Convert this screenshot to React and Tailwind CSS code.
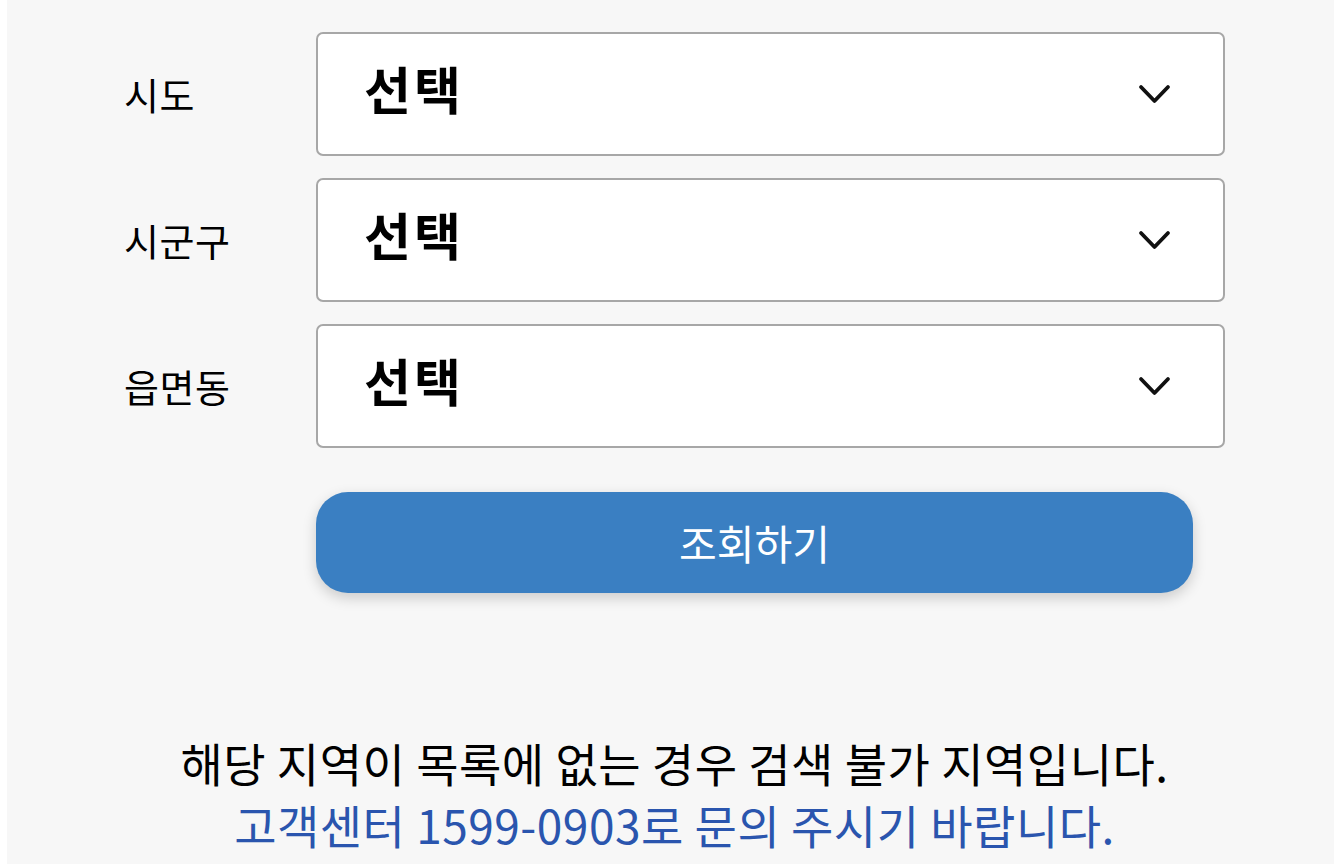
const KR = { fontFamily: '"Noto Sans CJK KR", "Noto Sans", sans-serif' }

// 지역 선택 한 줄: 라벨 + 셀렉트 박스
function RegionRow({ label }) {
  return (
    <div className="flex items-center">
      <span className="w-[192px] shrink-0 text-[38px] text-black leading-none tracking-[0.5px]">{label}</span>
      <div className="flex-1 h-[124px] bg-white border-2 border-[#a7a7a7] rounded-[7px] flex items-center justify-between pl-[46px] pr-[52px] pb-[12px]">
        <span className="text-[51px] font-bold text-black leading-none tracking-[3px]">선택</span>
        <svg width="33" height="20" viewBox="0 0 33 20" className="mt-[12px]">
          <polyline points="3,3 16.5,17 30,3" fill="none" stroke="#111" strokeWidth="3.8" strokeLinecap="round" strokeLinejoin="round" />
        </svg>
      </div>
    </div>
  )
}

export default function App() {
  return (
    <div className="flex min-h-screen bg-white" style={KR}>
      <div className="w-[7px] shrink-0" />
      <main className="flex-1 bg-[#f7f7f7] pl-[117px] pr-[109px] pt-[32px] pb-[20px]">
        <div className="flex flex-col gap-[22px]">
          <RegionRow label="시도" />
          <RegionRow label="시군구" />
          <RegionRow label="읍면동" />
        </div>

        <button
          type="button"
          className="mt-[44px] ml-[192px] w-[877px] h-[101px] rounded-[32px] bg-[#3a7fc2] text-white text-[41px] shadow-[0_5px_14px_rgba(0,0,0,0.18)] flex items-center justify-center"
        >
          조회하기
        </button>

        {/* 안내 문구 */}
        <div className="mt-[138px] text-center text-[46px] leading-[62px] tracking-[0.5px]">
          <p className="text-black">해당 지역이 목록에 없는 경우 검색 불가 지역입니다.</p>
          <p className="text-[#2a55ae]">고객센터 1599-0903로 문의 주시기 바랍니다.</p>
        </div>
      </main>
    </div>
  )
}
